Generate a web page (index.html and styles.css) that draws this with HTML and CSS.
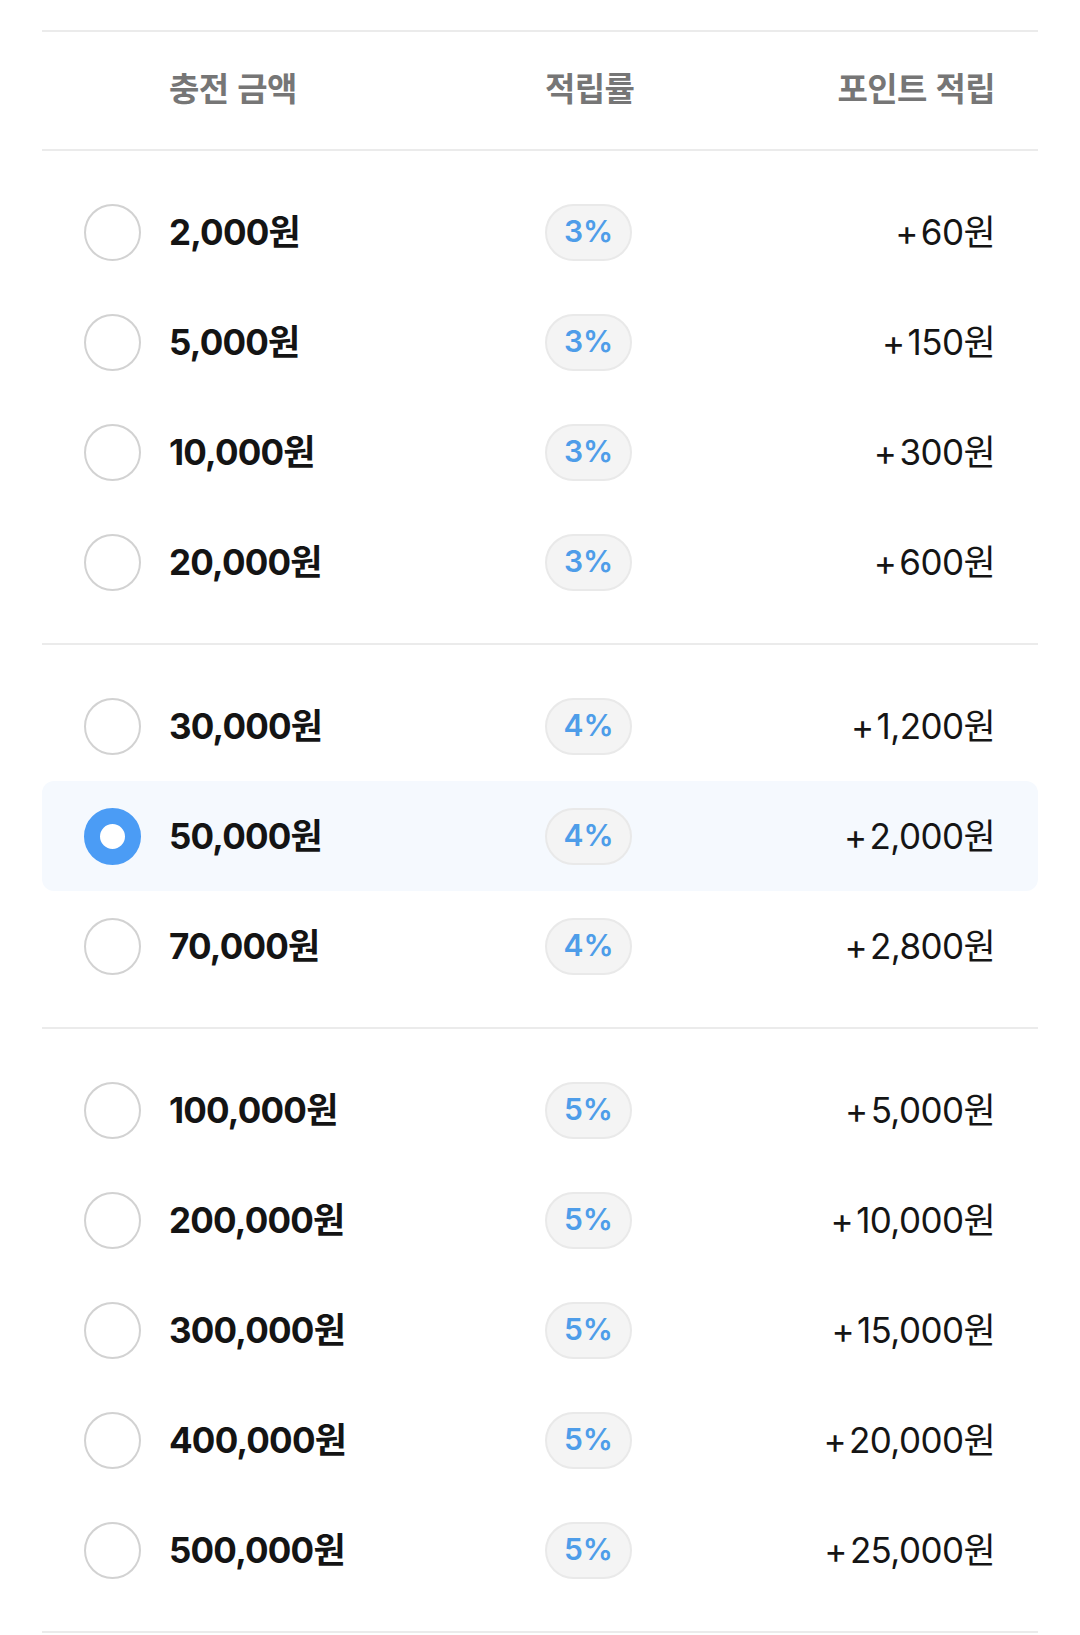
FILE: index.html
```html
<!DOCTYPE html>
<html lang="ko">
<head>
<meta charset="utf-8">
<link rel="stylesheet" href="styles.css">
</head>
<body>
<div class="table">
  <div class="head">
    <div class="h-amount">충전 금액</div>
    <div class="h-rate">적립률</div>
    <div class="h-point">포인트 적립</div>
  </div>

  <div class="group">
    <div class="row"><div class="c-amount"><span class="radio"></span><span class="amount">2,000원</span></div><div class="c-rate"><span class="pill">3%</span></div><div class="c-point"><span class="plus">+</span>60원</div></div>
    <div class="row"><div class="c-amount"><span class="radio"></span><span class="amount">5,000원</span></div><div class="c-rate"><span class="pill">3%</span></div><div class="c-point"><span class="plus">+</span>150원</div></div>
    <div class="row"><div class="c-amount"><span class="radio"></span><span class="amount">10,000원</span></div><div class="c-rate"><span class="pill">3%</span></div><div class="c-point"><span class="plus">+</span>300원</div></div>
    <div class="row"><div class="c-amount"><span class="radio"></span><span class="amount">20,000원</span></div><div class="c-rate"><span class="pill">3%</span></div><div class="c-point"><span class="plus">+</span>600원</div></div>
  </div>

  <div class="group">
    <div class="row"><div class="c-amount"><span class="radio"></span><span class="amount">30,000원</span></div><div class="c-rate"><span class="pill">4%</span></div><div class="c-point"><span class="plus">+</span>1,200원</div></div>
    <div class="row selected"><div class="c-amount"><span class="radio on"></span><span class="amount">50,000원</span></div><div class="c-rate"><span class="pill">4%</span></div><div class="c-point"><span class="plus">+</span>2,000원</div></div>
    <div class="row"><div class="c-amount"><span class="radio"></span><span class="amount">70,000원</span></div><div class="c-rate"><span class="pill">4%</span></div><div class="c-point"><span class="plus">+</span>2,800원</div></div>
  </div>

  <div class="group">
    <div class="row"><div class="c-amount"><span class="radio"></span><span class="amount">100,000원</span></div><div class="c-rate"><span class="pill">5%</span></div><div class="c-point"><span class="plus">+</span>5,000원</div></div>
    <div class="row"><div class="c-amount"><span class="radio"></span><span class="amount">200,000원</span></div><div class="c-rate"><span class="pill">5%</span></div><div class="c-point"><span class="plus">+</span>10,000원</div></div>
    <div class="row"><div class="c-amount"><span class="radio"></span><span class="amount">300,000원</span></div><div class="c-rate"><span class="pill">5%</span></div><div class="c-point"><span class="plus">+</span>15,000원</div></div>
    <div class="row"><div class="c-amount"><span class="radio"></span><span class="amount">400,000원</span></div><div class="c-rate"><span class="pill">5%</span></div><div class="c-point"><span class="plus">+</span>20,000원</div></div>
    <div class="row"><div class="c-amount"><span class="radio"></span><span class="amount">500,000원</span></div><div class="c-rate"><span class="pill">5%</span></div><div class="c-point"><span class="plus">+</span>25,000원</div></div>
  </div>
</div>
</body>
</html>
```
FILE: styles.css
```css
html, body {
  margin: 0;
  padding: 0;
  background: #ffffff;
}
body {
  font-family: Inter, "Noto Sans CJK KR", sans-serif;
  color: #111111;
}
.table {
  margin: 30px 42px 0 42px;
  border-top: 2px solid #ebebeb;
}
.head {
  height: 119px;
  box-sizing: border-box;
  padding: 0 43px 8px 42px;
  display: grid;
  grid-template-columns: 461px 87px 1fr;
  align-items: center;
  border-bottom: 2px solid #ebebeb;
  font-family: "Noto Sans CJK KR", sans-serif;
  font-size: 33px;
  font-weight: 700;
  color: #767676;
  letter-spacing: -0.6px;
}
.h-amount { padding-left: 85px; }
.h-rate { text-align: center; white-space: nowrap; }
.h-point { text-align: right; white-space: nowrap; }

.group {
  padding: 26px 0;
  border-bottom: 2px solid #ebebeb;
}
.row {
  height: 110px;
  box-sizing: border-box;
  display: grid;
  grid-template-columns: 461px 87px 1fr;
  align-items: center;
  padding: 0 43px 0 42px;
  border-radius: 12px;
}
.row.selected {
  background: #f5f9fe;
}
.c-amount {
  display: flex;
  align-items: center;
  gap: 28px;
}
.radio {
  width: 57px;
  height: 57px;
  box-sizing: border-box;
  border: 2px solid #d2d2d2;
  border-radius: 50%;
  background: #ffffff;
  flex: none;
}
.radio.on {
  border: 16px solid #4b9cf5;
}
.amount {
  font-size: 35px;
  font-weight: 700;
  letter-spacing: -0.8px;
  color: #141414;
  padding-bottom: 6px;
}
.c-rate {
  display: flex;
  justify-content: center;
}
.pill {
  width: 87px;
  height: 57px;
  box-sizing: border-box;
  border: 2px solid #e9e9e9;
  background: #f4f4f4;
  border-radius: 29px;
  display: flex;
  align-items: center;
  justify-content: center;
  font-size: 30px;
  font-weight: 600;
  color: #4e9de9;
  padding-bottom: 2px;
}
.c-point {
  text-align: right;
  font-size: 35px;
  font-weight: 400;
  color: #151515;
  letter-spacing: -0.6px;
  padding-bottom: 6px;
}
.plus {
  margin-right: 3px;
}
```
